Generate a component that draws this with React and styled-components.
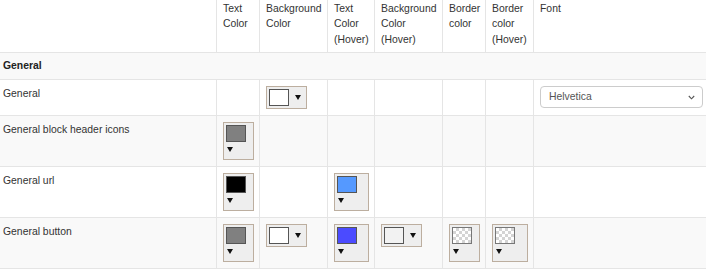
import React from "react";
import styled, { createGlobalStyle, css } from "styled-components";

const Global = createGlobalStyle`
  html, body { margin: 0; padding: 0; background: #fff; }
  body {
    width: 706px;
    overflow: hidden;
    font-family: "Liberation Sans", Arial, sans-serif;
    font-size: 10.4px;
    line-height: 15.5px;
    color: #333;
  }
`;

const COLS = "216px 43px 68px 47px 68px 43px 48px 175px";
const LINE = "#e5e5e5";

const Table = styled.div`
  display: flex;
  flex-direction: column;
  width: 708px;
`;

const Row = styled.div`
  display: grid;
  grid-template-columns: ${COLS};
  border-bottom: 1px solid ${LINE};
  background: ${(p) => (p.$striped ? "#f9f9f9" : "#fff")};
`;

const Cell = styled.div`
  box-sizing: border-box;
  min-width: 0;
  padding: ${(p) => (p.$head ? "0.5px 5px 5px 6px" : "6px 5px 6px 6px")};
  border-left: ${(p) => (p.$first ? "none" : `1px solid ${LINE}`)};
  ${(p) =>
    p.$first &&
    css`
      padding-left: 3px;
    `}
`;

const SectionCell = styled.div`
  grid-column: 1 / -1;
  padding: 5px 6px 5.5px 3px;
  font-weight: bold;
  color: #222;
`;

const Picker = styled.span`
  box-sizing: border-box;
  display: ${(p) => (p.$stacked ? "flex" : "inline-flex")};
  flex-direction: ${(p) => (p.$stacked ? "column" : "row")};
  align-items: ${(p) => (p.$stacked ? "flex-start" : "center")};
  width: ${(p) => (p.$stacked ? "100%" : "auto")};
  padding: 2px;
  border: 1px solid #bcae9f;
  background: #eeeeee;
  vertical-align: top;
`;

const Swatch = styled.span`
  box-sizing: border-box;
  display: block;
  width: 20px;
  height: 17px;
  border: 1px solid ${(p) => (p.$checker ? "#777" : "#555")};
  background-color: ${(p) => p.$color};
  ${(p) =>
    p.$checker &&
    css`
      background-color: #fff;
      background-image: linear-gradient(45deg, #d4d4d4 25%, transparent 25%, transparent 75%, #d4d4d4 75%),
        linear-gradient(45deg, #d4d4d4 25%, transparent 25%, transparent 75%, #d4d4d4 75%);
      background-size: 6px 6px;
      background-position: 0 0, 3px 3px;
    `}
`;

const Dropdown = styled.span`
  display: flex;
  align-items: center;
  justify-content: center;
  width: 8px;
  height: ${(p) => (p.$stacked ? "15px" : "17px")};
  margin: ${(p) => (p.$stacked ? "0" : "0 2px 0 5px")};
`;

const Arrow = styled.span`
  display: block;
  width: 6px;
  height: 5px;
  background: #111;
  clip-path: polygon(0 0, 100% 0, 50% 100%);
`;

const Select = styled.div`
  box-sizing: border-box;
  display: flex;
  align-items: center;
  justify-content: space-between;
  height: 22px;
  padding: 0 7px 0 8px;
  border: 1px solid #cccccc;
  border-radius: 4px;
  background: #fff;
  color: #555;
`;

const HEAD = [
  "Text Color",
  "Background Color",
  "Text Color (Hover)",
  "Background Color (Hover)",
  "Border color",
  "Border color (Hover)",
  "Font",
];
const NARROW = [true, false, true, false, true, true];

const ROWS = [
  { label: "General", colors: [null, "#ffffff", null, null, null, null], font: "Helvetica" },
  { label: "General block header icons", colors: ["#808080", null, null, null, null, null] },
  { label: "General url", colors: ["#000000", null, "#5599ff", null, null, null] },
  {
    label: "General button",
    colors: ["#808080", "#ffffff", "#4b4bff", "#f2f2f2", "checker", "checker"],
  },
];

function ColorPicker({ color, stacked }) {
  return (
    <Picker $stacked={stacked}>
      <Swatch $color={color} $checker={color === "checker"} />
      <Dropdown $stacked={stacked}>
        <Arrow />
      </Dropdown>
    </Picker>
  );
}

function Chevron() {
  return (
    <svg width="7" height="5" viewBox="0 0 7 5">
      <polyline points="0.8,1 3.5,3.8 6.2,1" fill="none" stroke="#555" strokeWidth="1.1" />
    </svg>
  );
}

export default function App() {
  return (
    <>
      <Global />
      <Table>
        <Row>
          <Cell $head $first />
          {HEAD.map((h) => (
            <Cell $head key={h}>
              {h}
            </Cell>
          ))}
        </Row>
        <Row $striped>
          <SectionCell>General</SectionCell>
        </Row>
        {ROWS.map((r, i) => (
          <Row key={r.label} $striped={i % 2 === 1}>
            <Cell $first>{r.label}</Cell>
            {r.colors.map((c, j) => (
              <Cell key={j}>{c && <ColorPicker color={c} stacked={NARROW[j]} />}</Cell>
            ))}
            <Cell>
              {r.font && (
                <Select>
                  <span>{r.font}</span>
                  <Chevron />
                </Select>
              )}
            </Cell>
          </Row>
        ))}
      </Table>
    </>
  );
}
